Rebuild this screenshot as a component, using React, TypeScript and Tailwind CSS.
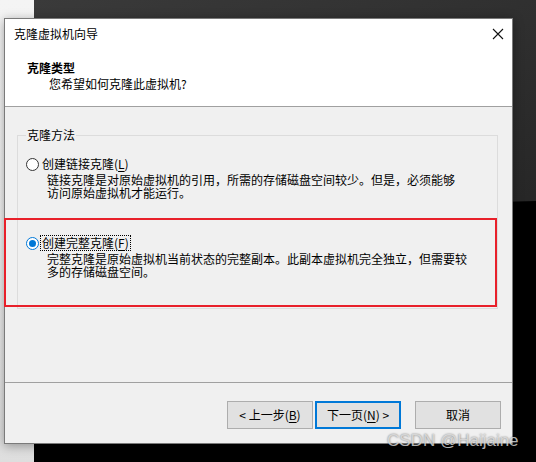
import React from "react";

const ui = "font-[family-name:'Microsoft_YaHei_UI','Noto_Sans_CJK_SC',sans-serif]";

function Radio({ checked }: { checked: boolean }) {
  return (
    <svg width="13" height="13" viewBox="0 0 13 13" className="shrink-0">
      <circle
        cx="6.5"
        cy="6.5"
        r="6"
        fill="#fff"
        stroke={checked ? "#0078d7" : "#333"}
        strokeWidth="1"
      />
      {checked && <circle cx="6.5" cy="6.5" r="3.5" fill="#0078d7" />}
    </svg>
  );
}

function Option({
  label,
  hotkey,
  checked,
  lines,
}: {
  label: string;
  hotkey: string;
  checked: boolean;
  lines: string[];
}) {
  return (
    <div className="flex flex-col">
      <div className="flex items-center h-[16px]">
        <Radio checked={checked} />
        <span
          className={
            "ml-[2px] px-[1px] leading-[14px] whitespace-nowrap " +
            (checked ? "outline outline-1 outline-dotted outline-black" : "outline outline-1 outline-transparent")
          }
        >
          {label}(<span className="underline underline-offset-2">{hotkey}</span>)
        </span>
      </div>
      <p className="mt-[1px] ml-[21px] leading-[13px] whitespace-nowrap">
        {lines[0]}
        <br />
        {lines[1]}
      </p>
    </div>
  );
}

export default function App() {
  return (
    <div className={`relative w-[536px] h-[462px] overflow-hidden bg-black text-[12px] text-black ${ui}`}>
      {/* desktop behind the window */}
      <div className="absolute left-0 top-0 bottom-0 w-[34px] bg-gradient-to-b from-[#f4f4f4] via-[#f0f0f0] to-[#dedede]" />
      <div className="absolute left-[34px] right-0 top-0 h-[216px] bg-gradient-to-br from-[#3a3a3a] to-[#262626] [clip-path:polygon(0_0,100%_0,100%_93%,0_100%)]" />

      {/* wizard window */}
      <div className="absolute left-[4px] top-[18px] w-[509px] h-[426px] border border-[#7a7a7a] bg-[#f0f0f0] flex flex-col shadow-[0_2px_10px_rgba(0,0,0,0.35)]">
        <div className="bg-white h-[87px] flex flex-col border-b border-[#a0a0a0] box-content">
          <div className="h-[28px] flex items-center justify-between pl-[9px] pr-[8px]">
            <span className="leading-[16px] pt-[1px]">克隆虚拟机向导</span>
            <svg width="12" height="12" viewBox="0 0 12 12" className="mt-[1px]">
              <path d="M1 1 L11 11 M11 1 L1 11" stroke="#111" strokeWidth="1.1" />
            </svg>
          </div>
          <div className="mt-[13px] pl-[22px] font-bold leading-[16px]">克隆类型</div>
          <div className="pl-[44px] leading-[16px]">您希望如何克隆此虚拟机?</div>
        </div>

        <div className="h-[275px] border-b border-[#a0a0a0] box-content">
          <fieldset className="mt-[20px] ml-[12px] mr-[14px] border border-[#dcdcdc] pl-[8px] pt-[13px] pb-[30px]">
            <legend className="px-[1px] leading-[16px]">克隆方法</legend>
            <Option
              label="创建链接克隆"
              hotkey="L"
              checked={false}
              lines={[
                "链接克隆是对原始虚拟机的引用，所需的存储磁盘空间较少。但是，必须能够",
                "访问原始虚拟机才能运行。",
              ]}
            />
            <div className="h-[36px]" />
            <Option
              label="创建完整克隆"
              hotkey="F"
              checked={true}
              lines={[
                "完整克隆是原始虚拟机当前状态的完整副本。此副本虚拟机完全独立，但需要较",
                "多的存储磁盘空间。",
              ]}
            />
          </fieldset>
        </div>

        <div className="flex-1 flex justify-end items-start pt-[18px] pr-[11px]">
          <button className="w-[86px] h-[28px] bg-[#e1e1e1] border border-[#adadad] leading-[16px]">
            &lt; 上一步(<span className="underline underline-offset-2">B</span>)
          </button>
          <button className="ml-[2px] w-[86px] h-[28px] bg-[#e1e1e1] border-2 border-[#0078d7] leading-[16px]">
            下一页(<span className="underline underline-offset-2">N</span>) &gt;
          </button>
          <button className="ml-[14px] w-[86px] h-[28px] bg-[#e1e1e1] border border-[#adadad] leading-[16px]">
            取消
          </button>
        </div>
      </div>

      {/* annotation */}
      <div className="absolute left-[4px] top-[218px] w-[493px] h-[89px] border-2 border-[#e8202a] pointer-events-none" />

      {/* watermark */}
      <div className="absolute left-[387px] top-[431px] leading-[20px] text-[17px] text-[#e4e4e4]/80 [text-shadow:0_0_2px_rgba(0,0,0,0.55)] font-[family-name:'Liberation_Sans',sans-serif] whitespace-nowrap">
        CSDN @Haijaine
      </div>
    </div>
  );
}
